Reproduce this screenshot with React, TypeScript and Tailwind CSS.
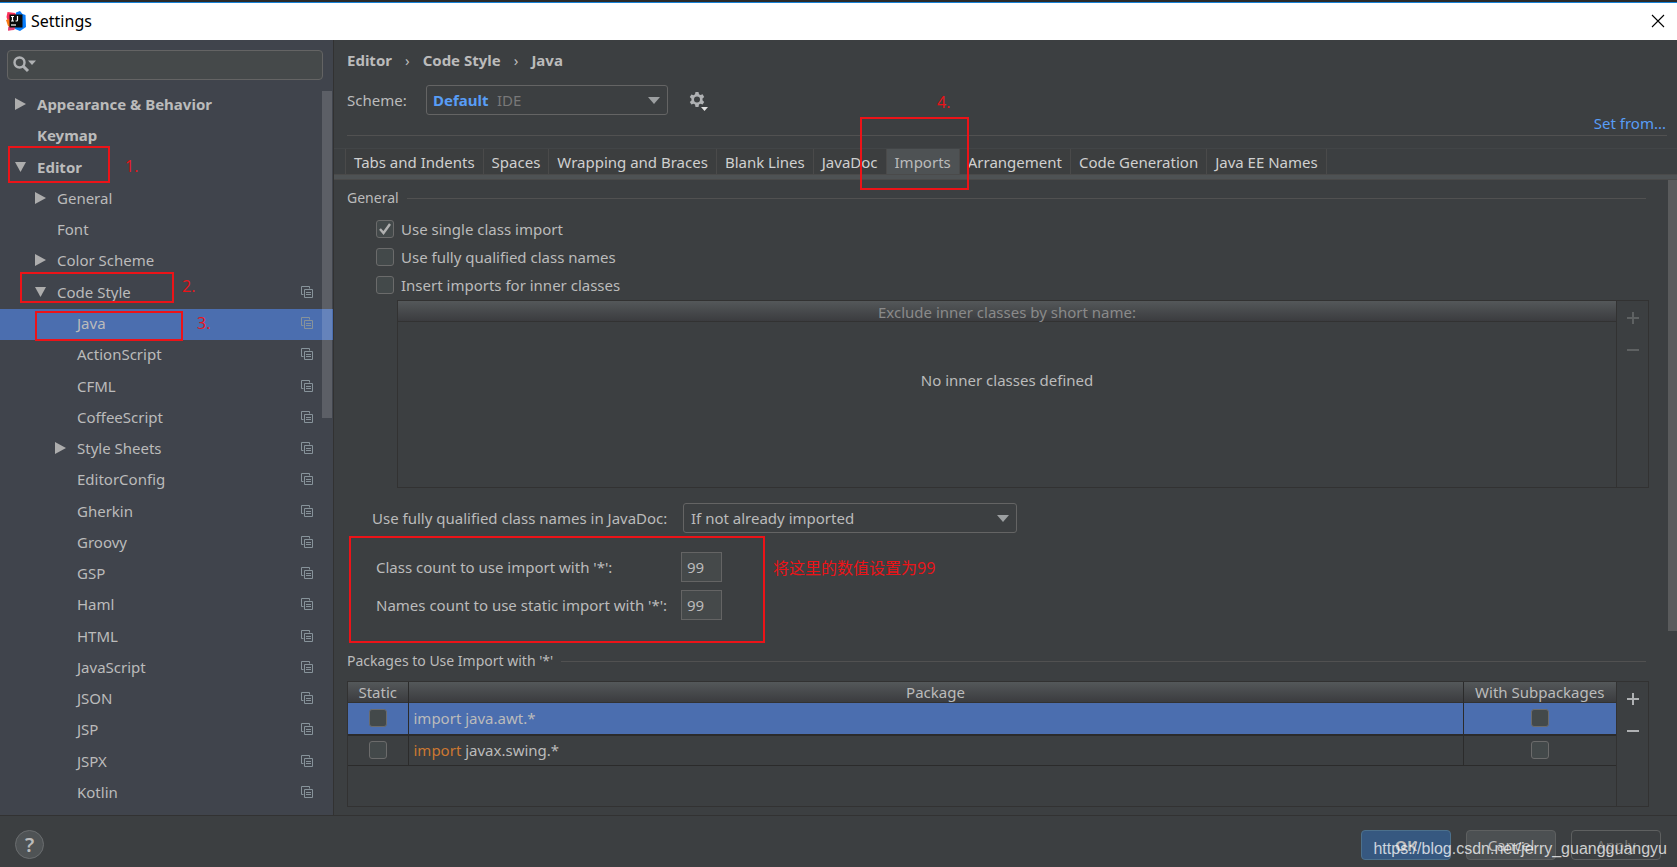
import { useState } from "react";
import type { ReactNode } from "react";
import clsx from "clsx";

interface TreeItem {
  label: string;
  level: number;
  arrow?: "right" | "down";
  shared?: boolean;
  mark?: ReactNode;
}

interface MarkProps {
  box: string;
  text?: string;
  textClass?: string;
}

// Red rectangle with an optional note, drawn over its parent
function Mark({ box, text, textClass }: MarkProps) {
  return (
    <>
      <span className={clsx("pointer-events-none absolute z-10 border-2 border-[#ec1318]", box)} />
      {text && (
        <span
          className={clsx(
            "pointer-events-none absolute z-10 whitespace-nowrap font-['Open_Sans','Noto_Sans_CJK_SC',sans-serif] text-base leading-5 font-normal text-[#ec1318]",
            textClass
          )}
        >
          {text}
        </span>
      )}
    </>
  );
}

const treeItems: TreeItem[] = [
  { label: "Appearance & Behavior", level: 0, arrow: "right" },
  { label: "Keymap", level: 0 },
  {
    label: "Editor",
    level: 0,
    arrow: "down",
    mark: <Mark box="left-2 -top-[7px] h-[37px] w-[102px]" text="1." textClass="left-[125px] top-[3px]" />,
  },
  { label: "General", level: 1, arrow: "right" },
  { label: "Font", level: 1 },
  { label: "Color Scheme", level: 1, arrow: "right" },
  {
    label: "Code Style",
    level: 1,
    arrow: "down",
    shared: true,
    mark: <Mark box="left-5 -top-1.5 h-[31px] w-[154px]" text="2." textClass="left-[182px] -top-0.5" />,
  },
  {
    label: "Java",
    level: 2,
    shared: true,
    mark: <Mark box="left-[35px] top-0.5 h-[30px] w-[148px]" text="3." textClass="left-[197px] top-1" />,
  },
  { label: "ActionScript", level: 2, shared: true },
  { label: "CFML", level: 2, shared: true },
  { label: "CoffeeScript", level: 2, shared: true },
  { label: "Style Sheets", level: 2, arrow: "right", shared: true },
  { label: "EditorConfig", level: 2, shared: true },
  { label: "Gherkin", level: 2, shared: true },
  { label: "Groovy", level: 2, shared: true },
  { label: "GSP", level: 2, shared: true },
  { label: "Haml", level: 2, shared: true },
  { label: "HTML", level: 2, shared: true },
  { label: "JavaScript", level: 2, shared: true },
  { label: "JSON", level: 2, shared: true },
  { label: "JSP", level: 2, shared: true },
  { label: "JSPX", level: 2, shared: true },
  { label: "Kotlin", level: 2, shared: true },
];

const indents = ["pl-[13px]", "pl-[33px]", "pl-[53px]"];

const tabs = [
  "Tabs and Indents",
  "Spaces",
  "Wrapping and Braces",
  "Blank Lines",
  "JavaDoc",
  "Imports",
  "Arrangement",
  "Code Generation",
  "Java EE Names",
];

function IdeaLogo() {
  return (
    <svg width="20" height="20" viewBox="0 0 20 20" aria-hidden="true">
      <path d="M1.500 1 9 2l3 4-4 13-6 .5L3 14 .5 6z" fill="#fc315b" />
      <path d="M0 9l3-1 2 8-3-1z" fill="#f97a12" />
      <path d="M2.500 16h7l-1 2.500-6.500 1z" fill="#e0457b" />
      <path d="M10 1.500 14 0l2.500 3L19.500 4l.5 12-6 4-5-2z" fill="#087cfa" />
      <path d="M3.500 3.500h13v13h-13z" fill="#0a0a0a" />
      <path
        d="M5 5.500h3M6.500 5.500v4.500M5 10h3M11.500 5v4q0 1-1 1H9.500"
        stroke="#fff"
        strokeWidth="1.200"
        fill="none"
      />
      <path d="M5 14h5" stroke="#fff" strokeWidth="1.200" />
    </svg>
  );
}

function TreeArrow({ dir }: { dir?: "right" | "down" }) {
  return (
    <svg width="13" height="12" viewBox="0 0 13 12" className="shrink-0" aria-hidden="true">
      {dir === "right" && <path d="M2 0v12l11-6z" fill="#adadad" />}
      {dir === "down" && <path d="M2 1h11l-5.500 10z" fill="#adadad" />}
    </svg>
  );
}

function SharedIcon() {
  return (
    <svg width="12" height="12" viewBox="0 0 12 12" fill="none" stroke="#87939a" aria-hidden="true">
      <path d="M2.500 8.500h-2v-8h8v2" />
      <path d="M3.500 3.500h8v8h-8z" />
      <path d="M5 6.500h5M5 8.500h5" />
    </svg>
  );
}

function DownArrow() {
  return (
    <svg
      width="12"
      height="7"
      viewBox="0 0 12 7"
      className="pointer-events-none absolute top-3 right-2"
      aria-hidden="true"
    >
      <path d="M0 0h12l-6 7z" fill="#9c9fa1" />
    </svg>
  );
}

function SectionTitle({ children }: { children: ReactNode }) {
  return (
    <div className="mr-[31px] flex h-5 items-center gap-2">
      <h2 className="text-sm leading-5">{children}</h2>
      <div className="h-px flex-1 bg-[#515151]" />
    </div>
  );
}

interface CheckProps {
  label: string;
  hideLabel?: boolean;
  defaultChecked?: boolean;
}

function Check({ label, hideLabel, defaultChecked }: CheckProps) {
  return (
    <label className={clsx("flex items-center gap-[7px]", hideLabel && "justify-center")}>
      <span className="relative size-[18px]">
        <input
          type="checkbox"
          aria-label={hideLabel ? label : undefined}
          defaultChecked={defaultChecked}
          className="peer block size-[18px] appearance-none rounded-[3px] border border-[#6b6b6b] bg-[#43494a]"
        />
        <svg
          viewBox="0 0 18 18"
          className="pointer-events-none absolute inset-0 hidden size-[18px] peer-checked:block"
          aria-hidden="true"
        >
          <path d="M4 9l3.500 4L14 4" fill="none" stroke="#b0b0b0" strokeWidth="2.400" />
        </svg>
      </span>
      {!hideLabel && <span>{label}</span>}
    </label>
  );
}

function AddRemove({ disabled }: { disabled?: boolean }) {
  const color = disabled ? "#5e6162" : "#afb1b3";
  return (
    <div className="flex w-8 flex-col items-center gap-5 border-l border-[#323232] pt-[11px]">
      <button type="button" aria-label="Add" disabled={disabled}>
        <svg width="12" height="12" viewBox="0 0 12 12" className="block">
          <path d="M0 6h12M6 0v12" stroke={color} strokeWidth="2" />
        </svg>
      </button>
      <button type="button" aria-label="Remove" disabled={disabled}>
        <svg width="12" height="12" viewBox="0 0 12 12" className="block">
          <path d="M0 6h12" stroke={color} strokeWidth="2" />
        </svg>
      </button>
    </div>
  );
}

function Sidebar() {
  const [selected, setSelected] = useState("Java");

  return (
    <aside className="relative flex w-[334px] shrink-0 flex-col border-r border-[#323232] bg-[#40444c]">
      <div className="relative mt-2.5 mr-2.5 ml-[7px]">
        <input
          type="text"
          aria-label="Search settings"
          className="block h-[30px] w-full rounded-[4px] border border-[#646464] bg-[#45494a] pl-9 outline-none"
        />
        <svg
          width="24"
          height="18"
          viewBox="0 0 24 18"
          className="pointer-events-none absolute top-1.5 left-1.5"
          aria-hidden="true"
        >
          <circle cx="6.500" cy="6.500" r="5" fill="none" stroke="#afb1b3" strokeWidth="2.400" />
          <path d="M10 10l5 5" stroke="#afb1b3" strokeWidth="3" />
          <path d="M15 4.500h8l-4 4.500z" fill="#afb1b3" />
        </svg>
      </div>
      <ul className="mt-2.5 mb-1.5 flex flex-1 flex-col">
        {treeItems.map((item) => (
          <li key={item.label} className="relative flex min-h-[31px] flex-1">
            <button
              type="button"
              onClick={() => setSelected(item.label)}
              className={clsx(
                "flex flex-1 items-center pr-5 pb-[3px] text-left",
                indents[item.level],
                item.level === 0 && "font-bold",
                selected === item.label && "bg-[#4b6eaf]"
              )}
            >
              <TreeArrow dir={item.arrow} />
              <span className="flex-1 pl-[11px]">{item.label}</span>
              {item.shared && <SharedIcon />}
            </button>
            {item.mark}
          </li>
        ))}
      </ul>
      <div className="pointer-events-none absolute top-[51px] right-px h-[327px] w-2.5 bg-white/15" />
    </aside>
  );
}

function PackagesTable() {
  return (
    <div className="mr-[28px] flex min-h-[126px] flex-1 border border-[#323232]">
      <div className="flex-1">
        <table className="w-full border-collapse">
          <thead>
            <tr className="h-5 border-b border-[#323232] bg-linear-to-b from-[#54585a] to-[#3b3c3f] leading-5">
              <th className="w-[60px] border-r border-[#2b2b2b] font-normal">Static</th>
              <th className="border-r border-[#2b2b2b] font-normal">Package</th>
              <th className="w-[153px] font-normal">With Subpackages</th>
            </tr>
          </thead>
          <tbody>
            <tr className="h-8 border-b-2 border-[#2b2b2b] bg-[#4b6eaf]">
              <td className="border-r border-[#2b2b2b]">
                <Check label="Static" hideLabel />
              </td>
              <td className="border-r border-[#2b2b2b] pl-[5px]">import java.awt.*</td>
              <td>
                <Check label="With Subpackages" hideLabel />
              </td>
            </tr>
            <tr className="h-[31px] border-b border-[#2b2b2b]">
              <td className="border-r border-[#2b2b2b]">
                <Check label="Static" hideLabel />
              </td>
              <td className="border-r border-[#2b2b2b] pl-[5px]">
                <span className="text-[#cc7832]">import</span> javax.swing.*
              </td>
              <td>
                <Check label="With Subpackages" hideLabel />
              </td>
            </tr>
          </tbody>
        </table>
      </div>
      <AddRemove />
    </div>
  );
}

function ImportsPanel() {
  return (
    <div className="relative flex flex-1 flex-col pt-2 pb-2 pl-[13px]">
      <SectionTitle>General</SectionTitle>
      <div className="mt-[9px] flex flex-col gap-1 pl-[29px]">
        <Check label="Use single class import" defaultChecked />
        <Check label="Use fully qualified class names" />
        <Check label="Insert imports for inner classes" />
      </div>
      <div className="mt-[3px] mr-[28px] ml-[50px] flex h-[188px] border border-[#323232]">
        <div className="flex flex-1 flex-col">
          <div className="h-[21px] border-b border-[#323232] bg-linear-to-b from-[#54585a] to-[#3b3c3f] text-center leading-[22px] text-[#8a8a8a]">
            Exclude inner classes by short name:
          </div>
          <div className="pt-[46px] text-center">No inner classes defined</div>
        </div>
        <AddRemove disabled />
      </div>

      <div className="mt-[15px] flex items-center gap-2.5 pl-[25px]">
        <label htmlFor="javadoc" className="w-[301px]">
          Use fully qualified class names in JavaDoc:
        </label>
        <div className="relative w-[334px]">
          <select
            id="javadoc"
            className="block h-[30px] w-full appearance-none rounded-[3px] border border-[#646464] bg-[#3c3f41] pl-[7px]"
          >
            <option>If not already imported</option>
            <option>Always</option>
            <option>Never, use short name and add import</option>
          </select>
          <DownArrow />
        </div>
      </div>

      <div className="relative mt-[19px] mb-[31px] grid grid-cols-[305px_41px] items-center gap-y-2 pl-[29px]">
        <label htmlFor="classCount">Class count to use import with '*':</label>
        <input
          id="classCount"
          defaultValue="99"
          className="h-[30px] w-[41px] border border-[#646464] bg-[#45494a] pl-[5px]"
        />
        <label htmlFor="namesCount">Names count to use static import with '*':</label>
        <input
          id="namesCount"
          defaultValue="99"
          className="h-[30px] w-[41px] border border-[#646464] bg-[#45494a] pl-[5px]"
        />
        <Mark
          box="left-0.5 -top-4 h-[107px] w-[416px]"
          text="将这里的数值设置为99"
          textClass="left-[426px] top-1.5"
        />
      </div>

      <SectionTitle>Packages to Use Import with '*'</SectionTitle>
      <div className="mt-2.5 flex flex-1 flex-col">
        <PackagesTable />
      </div>
      <div className="pointer-events-none absolute top-0 right-0 h-[451px] w-[9px] bg-[#5a5b5c]" />
    </div>
  );
}

export default function App() {
  const [tab, setTab] = useState("Imports");

  return (
    <div className="flex min-h-screen flex-col bg-[#3c3f41] font-['Noto_Sans','Noto_Sans_CJK_SC',sans-serif] text-[15px] leading-6 text-[#bbbbbb]">
      <header className="flex h-10 items-center border-t-2 border-[#2b2b2b] bg-white text-black">
        <div className="flex h-full flex-1 items-center gap-1 border-t border-[#1883d7] pr-3 pb-px pl-1.5">
          <IdeaLogo />
          <h1 className="flex-1 pl-px text-base">Settings</h1>
          <button type="button" aria-label="Close">
            <svg width="14" height="14" viewBox="0 0 14 14" className="block">
              <path d="M1 1l12 12M13 1L1 13" stroke="#000" strokeWidth="1.100" />
            </svg>
          </button>
        </div>
      </header>

      <div className="flex flex-1">
        <Sidebar />

        <main className="flex min-w-0 flex-1 flex-col">
          <div className="ml-[13px] mr-2.5 border-b border-[#515151]">
            <nav className="flex h-10 items-center gap-[13px] font-bold" aria-label="Breadcrumb">
              <span>Editor</span>
              <span className="font-normal">›</span>
              <span>Code Style</span>
              <span className="font-normal">›</span>
              <span>Java</span>
            </nav>
            <div className="flex h-[55px] items-start pt-[5px]">
              <label htmlFor="scheme" className="w-[79px] leading-[30px]">
                Scheme:
              </label>
              <div className="relative w-[242px]">
                <select
                  id="scheme"
                  className="block h-[30px] w-full appearance-none rounded-[3px] border border-[#646464] bg-[#3c3f41] pl-[6px] font-bold text-[#589df6]"
                >
                  <option>Default</option>
                  <option>Project</option>
                </select>
                <span className="pointer-events-none absolute top-0 left-[71px] leading-[30px] text-[#787878]">
                  IDE
                </span>
                <DownArrow />
              </div>
              <button type="button" aria-label="Scheme actions" className="mt-[6px] ml-[21px]">
                <svg width="20" height="20" viewBox="0 0 20 20" className="block" fill="#afb1b3">
                  <path
                    fillRule="evenodd"
                    d="M6.500 1h3l.5 2.300 1.400.8 2.200-.8 1.600 2.700-1.700 1.600v1.700l1.700 1.600-1.600 2.700-2.200-.8-1.400.8-.5 2.400h-3l-.5-2.400-1.400-.8-2.200.8L.800 11l1.700-1.600V7.700L.800 6.100l1.600-2.700 2.200.8L6 3.300zM8 5.500a3 3 0 1 0 0 6 3 3 0 0 0 0-6z"
                  />
                  <path d="M12 16h7l-3.500 4z" fill="#e0e0e0" />
                </svg>
              </button>
              <a href="#" className="mt-[26px] mr-px ml-auto text-[#589df6]">
                Set from...
              </a>
            </div>
          </div>

          <div className="relative mt-3 flex border-t border-[#424547] pl-[11px]">
            <div role="tablist" className="flex border-l border-[#4a4a4a]">
              {tabs.map((name) => (
                <button
                  key={name}
                  type="button"
                  role="tab"
                  aria-selected={tab === name}
                  onClick={() => setTab(name)}
                  className={clsx(
                    "h-[25px] border-r border-[#4a4a4a] px-2 whitespace-nowrap",
                    tab === name ? "bg-[#4e5254]" : "bg-[#3c3e3f] text-[#d0d0d0]"
                  )}
                >
                  {name}
                </button>
              ))}
            </div>
            <Mark box="left-[526px] -top-8 h-[73px] w-[109px]" text="4." textClass="left-[603px] -top-[57px]" />
          </div>
          <div className="h-1.5 border-y border-[#4a4a4a] bg-[#4e5254]" />

          <ImportsPanel />
        </main>
      </div>

      <footer className="relative flex h-[52px] items-start gap-[15px] border-t border-[#323232] pt-3.5 pr-4 pl-[15px]">
        <button
          type="button"
          aria-label="Help"
          className="mr-auto size-[29px] rounded-full border border-[#6a6d6f] bg-[#4f5355] text-xl leading-none font-semibold"
        >
          ?
        </button>
        <button
          type="button"
          className="h-[30px] w-[90px] rounded-[4px] border border-[#4c708c] bg-[#365880] font-bold"
        >
          OK
        </button>
        <button type="button" className="h-[30px] w-[90px] rounded-[4px] border border-[#5e6060] bg-[#4c5052]">
          Cancel
        </button>
        <button
          type="button"
          disabled
          className="h-[30px] w-[90px] rounded-[4px] border border-[#5e6060] text-[#777777]"
        >
          Apply
        </button>
        <span className="pointer-events-none absolute right-2.5 bottom-2 font-['Liberation_Sans',sans-serif] text-base leading-5 text-white/75">
          https://blog.csdn.net/jerry_guangguangyu
        </span>
      </footer>
    </div>
  );
}
